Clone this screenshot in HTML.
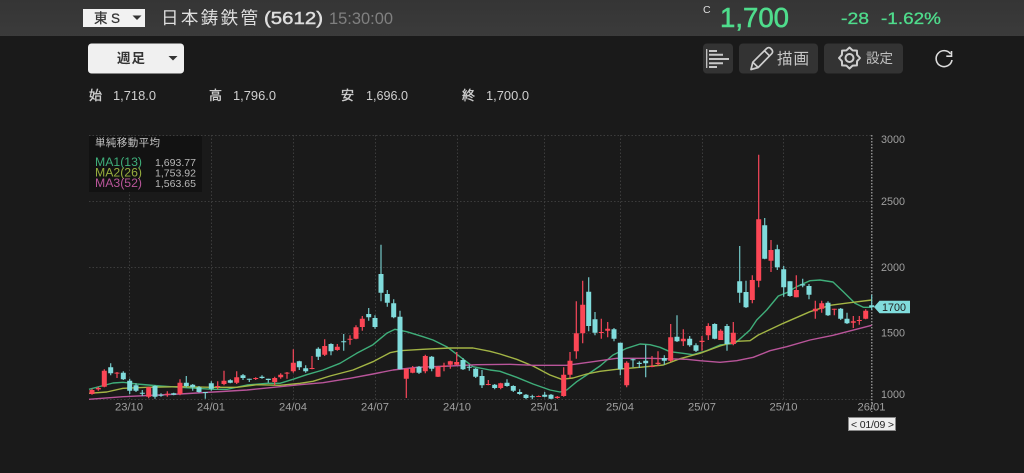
<!DOCTYPE html>
<html lang="ja">
<head>
<meta charset="utf-8">
<title>日本鋳鉄管 (5612)</title>
<style>
html,body{margin:0;padding:0;background:#1a1a1a;width:1024px;height:473px;overflow:hidden}
svg{display:block;filter:blur(.35px)}
text{font-family:"Liberation Sans","Noto Sans CJK JP",sans-serif}
</style>
</head>
<body>
<svg width="1024" height="473" viewBox="0 0 1024 473" xmlns="http://www.w3.org/2000/svg">
<defs><linearGradient id="h" x1="0" y1="0" x2="0" y2="1"><stop offset="0" stop-color="#353535"/><stop offset="1" stop-color="#3b3b3b"/></linearGradient></defs>
<rect width="1024" height="473" fill="#1a1a1a"/>
<rect width="1024" height="36" fill="url(#h)"/>

<!-- header -->
<rect x="83" y="9" width="62" height="18" fill="#f2f2f2"/>
<text x="94" y="23" font-size="13.500" fill="#333" stroke="#333" stroke-width=".25" textLength="26" lengthAdjust="spacing">東S</text>
<path d="M132.500 15.500h9l-4.500 4.500z" fill="#333"/>
<text x="161" y="24" font-size="17.500" fill="#dedede" textLength="97">日本鋳鉄管</text>
<text x="264" y="24" font-size="17.500" fill="#dedede" stroke="#dedede" stroke-width=".5" textLength="59" lengthAdjust="spacingAndGlyphs">(5612)</text>
<text x="329" y="24" font-size="17" fill="#808080" textLength="64" lengthAdjust="spacingAndGlyphs">15:30:00</text>
<text x="703" y="13" font-size="10.500" fill="#dedede">C</text>
<text x="720" y="27" font-size="28" fill="#4fdc8c" stroke="#4fdc8c" stroke-width=".6" textLength="69" lengthAdjust="spacingAndGlyphs">1,700</text>
<text x="841" y="24" font-size="17" fill="#4fdc8c" stroke="#4fdc8c" stroke-width=".3" textLength="28" lengthAdjust="spacingAndGlyphs">-28</text>
<text x="881" y="24" font-size="17" fill="#4fdc8c" stroke="#4fdc8c" stroke-width=".3" textLength="60" lengthAdjust="spacingAndGlyphs">-1.62%</text>

<!-- toolbar -->
<rect x="88" y="43.500" width="96" height="30" rx="3.500" fill="#f0f0f0"/>
<text x="117" y="63" font-size="13.500" fill="#333" font-weight="bold" textLength="28">週足</text>
<path d="M168.500 56h9l-4.500 4.500z" fill="#333"/>
<rect x="703" y="43.500" width="30" height="30" rx="4" fill="#333"/>
<rect x="739" y="43.500" width="79" height="30" rx="4" fill="#333"/>
<rect x="824" y="43.500" width="79" height="30" rx="4" fill="#333"/>
<path d="M706.700 49V68" stroke="#c8c8c8" stroke-width="1.300" fill="none"/>
<path d="M709 51h8M709 54.800h14M709 59h20M709 63.300h14M709 67h8" stroke="#c8c8c8" stroke-width="2" fill="none"/>
<path d="M751 69.500l1.800-7.300L766.500 48.600c1.300-1.300 3-1.300 4.200-.1l1 1c1.200 1.200 1.200 3 0 4.200L758.200 67.500zM752.800 62.200l5.400 5.300M764.500 50.800l5 5" stroke="#cfcfcf" stroke-width="1.700" fill="none" stroke-linejoin="round"/>
<text x="777" y="64" font-size="15.500" fill="#c8c8c8" textLength="32">描画</text>
<path d="M860 58L857.080 61.140 856.920 65.420 852.640 65.580 849.500 68.500 846.360 65.580 842.080 65.420 841.920 61.140 839 58 841.920 54.860 842.080 50.580 846.360 50.420 849.500 47.500 852.640 50.420 856.920 50.580 857.080 54.860Z" fill="none" stroke="#cfcfcf" stroke-width="2" stroke-linejoin="round"/>
<circle cx="849.500" cy="58" r="4" fill="none" stroke="#cfcfcf" stroke-width="2"/>
<text x="866" y="63" font-size="13.500" fill="#c0c0c0" textLength="27">設定</text>
<path d="M950.500 53.800A8 8 0 1 0 952 60" fill="none" stroke="#dcdcdc" stroke-width="1.600"/>
<path d="M951.500 51V56.200H946.300" fill="none" stroke="#dcdcdc" stroke-width="1.600"/>

<!-- OHLC -->
<g font-size="12.500" fill="#d0d0d0">
<text x="89" y="100" font-size="13" stroke="#d0d0d0" stroke-width=".35">始</text><text x="113" y="100" textLength="43" lengthAdjust="spacingAndGlyphs">1,718.0</text>
<text x="209" y="100" font-size="13" stroke="#d0d0d0" stroke-width=".35">高</text><text x="233" y="100" textLength="43" lengthAdjust="spacingAndGlyphs">1,796.0</text>
<text x="341" y="100" font-size="13" stroke="#d0d0d0" stroke-width=".35">安</text><text x="366" y="100" textLength="42" lengthAdjust="spacingAndGlyphs">1,696.0</text>
<text x="462" y="100" font-size="13" stroke="#d0d0d0" stroke-width=".35">終</text><text x="486" y="100" textLength="43" lengthAdjust="spacingAndGlyphs">1,700.0</text>
</g>

<!-- grid -->
<path d="M89 135.500H872M89 201.500H872M89 267.500H872M89 333.500H872M89 399.500H872M129.500 135V399M211.500 135V399M293.500 135V399M375.500 135V399M457.500 135V399M544.500 135V399M620.500 135V399M702.500 135V399M783.500 135V399" stroke="#3c3c3c" stroke-width="1" stroke-dasharray="1.500 2" fill="none"/>
<path d="M871.800 135V412" stroke="#a8a8a8" stroke-width="1.200" stroke-dasharray="1.500 1.500" fill="none"/>

<!-- moving averages -->
<g fill="none" stroke-width="1.400" stroke-linejoin="round">
<path stroke="#3fae7a" d="M89 389.300 113 383 123 382.300 136.700 384 160 386 180 387.300 213 389.300 227 389.300 247 385 267 383.300 280 383.300 293 379.300 306.700 374.700 323 370 340 363.300 356.700 353.300 373 344.700 386.700 333.300 395 329.300 406.700 331.700 423 336.700 433 340 446.700 346.700 460 356.700 473 366.700 490 370 500 371.300 516.700 377.300 533 384 550 390 560 392 566.700 390 576.700 381.700 586.700 375 600 366 613 355 626.700 348.300 640 344 650 344.700 660 347.300 670 351.700 683 353.300 693 354.700 706.700 350.700 720 345 735 343.300 750 330 756.700 320 766.700 310 778.300 296 786.700 292.700 796.700 286.700 810 280.700 820 280 833 282 843.300 291.700 855 303.300 863.300 307.300 871.700 307.300"/>
<path stroke="#a3b545" d="M89 393.300 106.700 392 123 388.300 146.700 387.300 180 386.700 213 387.300 237 387.300 257 384.700 280 385.300 300 383.300 313 381.300 330 376 353 370 373 361.700 390 352.700 400 350.700 423 349.300 450 348 473 348 490 351.300 500 354 516.700 359.300 533 366 550 375 561.700 379.300 573 378 586.700 374 600 371.300 616.700 369.300 640 367.300 663.300 365 680 358.700 700 353.300 720 346 736.700 341.300 750 340.700 758.300 335 783.300 323.300 810 311.700 830 305.300 850 302.700 871.700 300"/>
<path stroke="#b9559a" d="M89 399.300 123 396.700 180 394 247 390 300 384.700 323 382.700 350 378.300 373 374 393 370 417 367.300 450 366 477 364.700 510 364.300 533 365.300 566.700 365.300 593 361.700 616.700 358.300 650 358.300 686.700 359.300 700 360.700 720 362.300 736.700 360.700 753.300 357.300 770 350.700 786.700 346.700 810 340 833 335.300 871.700 325.300"/>
</g>

<!-- red wicks -->
<path fill="none" stroke="#f9475a" stroke-width="1.200" d="M92 388.700V394.700M98.300 386.700V390.700M104.300 369.300V387.300M117 372V378M148.700 386.700V398.300M167.300 391.300V396.700M180 379.300V395.300M217.700 381.300V389.300M224 370.700V385.300M236.700 371.300V384M255.700 377.300V380M274.700 376.700V385.300M280.700 373.300V378.700M287 372V378.700M293.300 349.300V372.700M312 356V369.300M324.700 339.300V356M337.300 344V350.700M350 335.300V344.700M356 325.300V339.300M362.300 316V330.700M406.300 368.700V398M412.700 366V373.300M425.300 354.700V373.300M438 366V377M444 362.700V371.300M450.300 360.700V368.700M456.700 352V365.300M488.300 380V385.300M500.700 382.700V389.300M538.700 395.500V397M557.300 396V398.700M563.700 367.300V396.700M570 352V378M576.300 301.300V358.700M582.700 280.700V343.300M601.300 318.700V338.700M607.700 322V337.300M626.700 361.300V387.300M652 356V367.300M658 351.300V366M670.700 324V362M683.300 329.300V346M702 336V350.700M708.300 323.300V340M720.700 329.300V340M733.300 322V345.300M752.300 275.300V303.300M758.700 154.700V287.300M771 240V272M796.300 275.300V297.300M815.300 300.700V318.700M821.700 300.700V312.700M834.300 308.700V315.300M853.300 316V328M859.300 316V324.700M865.700 309.300V319.300"/>
<!-- cyan wicks -->
<path fill="none" stroke="#74c9c9" stroke-width="1.200" d="M110.700 363.300V375.300M123.300 371.300V380M129.700 378.700V394M136 383.300V392M142.300 390V396M155 385.300V398.700M161 393.300V396.700M173.700 392.700V395.300M186.300 376V387.300M192.700 384V390.700M199 386V392.700M205.300 392V398.700M211.300 381.300V390.700M230.300 379.300V383.300M243 374V380M249.300 378.700V382M262 375.300V378.700M268.300 378.700V382.700M299.300 360.700V370M305.700 365.300V372.700M318.300 347.300V360M331 343.300V355.300M343.700 334V350.700M368.700 308V320.700M375 315.300V328.700M381 244.700V301.300M387.300 290V306.700M393.700 299.300V318.300M400 310.700V369.300M419 366V374M431.700 356V371.300M463 358V370M469.300 364.700V370.700M475.700 368V378M482 370V388M494.700 384V389.300M507 379.300V386.700M513.300 385.300V392M519.700 389.300V394.700M526 394V399.300M532.300 394.700V399.300M544.700 392V397.300M551 394V399.300M588.700 277.300V331.300M595 312V335.300M614 328V341.300M620.300 342.700V375.300M633 358.700V367.300M639.300 361.300V368M645.700 344.700V377.300M664.300 355.300V364.700M677 315.300V342M689.700 336V346.700M696 343.300V352M714.700 323.300V339.300M727 324V350.700M739.700 246V302.700M746 280.700V308M764.700 218V259.300M777.300 244.700V270M783.700 266V296.700M790 281.300V296.700M802.700 278.700V287.300M809 284V299.300M828 301.300V316M840.700 308V320M847 312.700V324M871.700 294.700V310"/>
<!-- red bodies -->
<path fill="#fb4655" d="M89.500 390h5v4h-5zM95.800 388h5v1.400h-5zM101.800 370.700h5v16h-5zM114.500 372.600h5v1h-5zM146.200 387.300h5v9.400h-5zM164.800 393.700h5v1h-5zM177.500 382.700h5v11.300h-5zM215.200 386h5v1h-5zM221.500 380.700h5v3.300h-5zM234.200 377.300h5v5.400h-5zM253.200 378h5v1h-5zM272.200 378h5v4h-5zM278.200 374.700h5v2.600h-5zM284.500 372.600h5v1h-5zM290.800 362.700h5v8.600h-5zM309.500 368h5v1h-5zM322.200 346h5v8.700h-5zM334.800 346.700h5v3.300h-5zM347.500 338.700h5v1h-5zM353.500 327.300h5v11.400h-5zM359.800 318.700h5v8.300h-5zM403.800 368.700h5v10h-5zM410.200 368h5v4.700h-5zM422.800 356h5v15.300h-5zM435.500 366.700h5v10h-5zM441.500 365.600h5v1h-5zM447.800 361.300h5v3.400h-5zM454.200 362h5v2.700h-5zM485.800 384h5v1h-5zM498.200 383.300h5v4.700h-5zM536.200 396h5v1h-5zM554.800 396.700h5v1.300h-5zM561.200 374.700h5v21.300h-5zM567.500 360.700h5v14h-5zM573.800 333.300h5v18h-5zM580.200 304.700h5v28.600h-5zM598.800 332h5v1h-5zM605.200 328.700h5v2h-5zM624.200 362.700h5v22.600h-5zM649.500 366h5v1h-5zM655.500 362.700h5v1.300h-5zM668.200 337.300h5v23.400h-5zM680.800 338.700h5v2.600h-5zM699.500 340.700h5v1.300h-5zM705.800 326h5v9.300h-5zM718.200 330.700h5v9.300h-5zM730.800 332.700h5v11.300h-5zM749.800 280h5v20h-5zM756.200 219.300h5v61.400h-5zM768.500 250h5v10.700h-5zM793.800 290h5v7.300h-5zM812.800 308.700h5v2.600h-5zM819.200 303.300h5v5.400h-5zM831.800 308.700h5v1h-5zM850.800 321.300h5v1.400h-5zM856.800 320h5v1h-5zM863.200 310.700h5v8h-5z"/>
<!-- cyan bodies -->
<path fill="#80dcdc" d="M108.200 367.300h5v6h-5zM120.800 372.700h5v6.600h-5zM127.200 380.700h5v10h-5zM133.500 385.300h5v5.400h-5zM139.800 392.700h5v1h-5zM152.500 386h5v10.700h-5zM158.500 394.700h5v1h-5zM171.200 393.300h5v1.400h-5zM183.800 382.700h5v3.300h-5zM190.200 384.700h5v2.600h-5zM196.500 387.300h5v4.700h-5zM202.800 392h5v1h-5zM208.800 383.300h5v5.400h-5zM227.800 380.300h5v2.400h-5zM240.500 375.300h5v2.700h-5zM246.800 378.700h5v1h-5zM259.500 376.700h5v1.300h-5zM265.800 378.700h5v1.300h-5zM296.800 361.300h5v6h-5zM303.200 368.300h5v3h-5zM315.800 348.700h5v8h-5zM328.500 344h5v7.300h-5zM341.200 341.300h5v1h-5zM366.200 314h5v3.300h-5zM372.500 318h5v9h-5zM378.500 274h5v18.700h-5zM384.800 294h5v8.700h-5zM391.200 303.300h5v14h-5zM397.500 316.700h5v52.600h-5zM416.500 366.700h5v6h-5zM429.200 356.700h5v12h-5zM460.500 360h5v9.300h-5zM466.800 366.700h5v1h-5zM473.200 368.700h5v8h-5zM479.500 376h5v9.300h-5zM492.200 384.700h5v3.300h-5zM504.500 382.700h5v3.300h-5zM510.800 386h5v4.700h-5zM517.200 392h5v2h-5zM523.500 394.700h5v3.300h-5zM529.800 396.300h5v1h-5zM542.200 394.700h5v2h-5zM548.500 394.700h5v4h-5zM586.200 291.700h5v34.300h-5zM592.500 319.300h5v13.400h-5zM611.500 329.300h5v9.400h-5zM617.800 342.700h5v26.600h-5zM630.500 359.300h5v1h-5zM636.800 362.700h5v1.300h-5zM643.200 360.700h5v2.600h-5zM661.800 358h5v2.700h-5zM674.500 336.700h5v4.600h-5zM687.200 338.700h5v6.600h-5zM693.500 345.300h5v5.400h-5zM712.200 324h5v14.700h-5zM724.500 326h5v18h-5zM737.200 281.300h5v11.400h-5zM743.500 292h5v15.300h-5zM762.200 225.300h5v33.400h-5zM774.800 249.300h5v18h-5zM781.200 269.300h5v18h-5zM787.500 281.300h5v14.700h-5zM800.200 284.200h5v1.300h-5zM806.500 286h5v8.700h-5zM825.500 302.700h5v12.600h-5zM838.200 308.700h5v10h-5zM844.500 318.700h5v4.600h-5zM869.200 305.300h5v2h-5z"/>

<!-- legend -->
<rect x="89" y="136" width="113" height="56" fill="#121212"/>
<text x="95" y="146" font-size="10.500" fill="#c4c4c4" textLength="65">単純移動平均</text>
<g font-size="11.500">
<text x="95" y="166" fill="#3fae7a" textLength="47" lengthAdjust="spacingAndGlyphs">MA1(13)</text>
<text x="95" y="176.500" fill="#97ad3e" textLength="47" lengthAdjust="spacingAndGlyphs">MA2(26)</text>
<text x="95" y="187" fill="#b9559a" textLength="47" lengthAdjust="spacingAndGlyphs">MA3(52)</text>
</g>
<g font-size="10.500" fill="#b8b8b8">
<text x="155" y="166" textLength="41" lengthAdjust="spacingAndGlyphs">1,693.77</text>
<text x="155" y="176.500" textLength="41" lengthAdjust="spacingAndGlyphs">1,753.92</text>
<text x="155" y="187" textLength="41" lengthAdjust="spacingAndGlyphs">1,563.65</text>
</g>

<!-- axes labels -->
<g font-size="11" fill="#a0a0a0">
<text x="881" y="143" textLength="24" lengthAdjust="spacingAndGlyphs">3000</text>
<text x="881" y="205" textLength="24" lengthAdjust="spacingAndGlyphs">2500</text>
<text x="881" y="271" textLength="24" lengthAdjust="spacingAndGlyphs">2000</text>
<text x="881" y="336.500" textLength="24" lengthAdjust="spacingAndGlyphs">1500</text>
<text x="881" y="398" textLength="24" lengthAdjust="spacingAndGlyphs">1000</text>
</g>
<g font-size="11" fill="#a0a0a0">
<text x="115" y="410.500" textLength="28" lengthAdjust="spacingAndGlyphs">23/10</text>
<text x="197" y="410.500" textLength="28" lengthAdjust="spacingAndGlyphs">24/01</text>
<text x="279" y="410.500" textLength="28" lengthAdjust="spacingAndGlyphs">24/04</text>
<text x="361" y="410.500" textLength="28" lengthAdjust="spacingAndGlyphs">24/07</text>
<text x="443" y="410.500" textLength="28" lengthAdjust="spacingAndGlyphs">24/10</text>
<text x="530.500" y="410.500" textLength="28" lengthAdjust="spacingAndGlyphs">25/01</text>
<text x="606" y="410.500" textLength="28" lengthAdjust="spacingAndGlyphs">25/04</text>
<text x="688" y="410.500" textLength="28" lengthAdjust="spacingAndGlyphs">25/07</text>
<text x="769.500" y="410.500" textLength="28" lengthAdjust="spacingAndGlyphs">25/10</text>
<text x="857.500" y="410.500" textLength="28" lengthAdjust="spacingAndGlyphs">26/01</text>
</g>

<!-- last price tag -->
<path d="M874 307l5.500-6.300H910V313.300H879.500z" fill="#80dcdc"/>
<text x="882" y="311" font-size="11" fill="#222" textLength="24" lengthAdjust="spacingAndGlyphs">1700</text>

<!-- date box -->
<rect x="848.500" y="417.500" width="47" height="13" fill="#eeeeee" stroke="#888" stroke-width="1"/>
<text x="851" y="428" font-size="10.500" fill="#222" textLength="43" lengthAdjust="spacing">&lt; 01/09 &gt;</text>
</svg>
</body>
</html>
